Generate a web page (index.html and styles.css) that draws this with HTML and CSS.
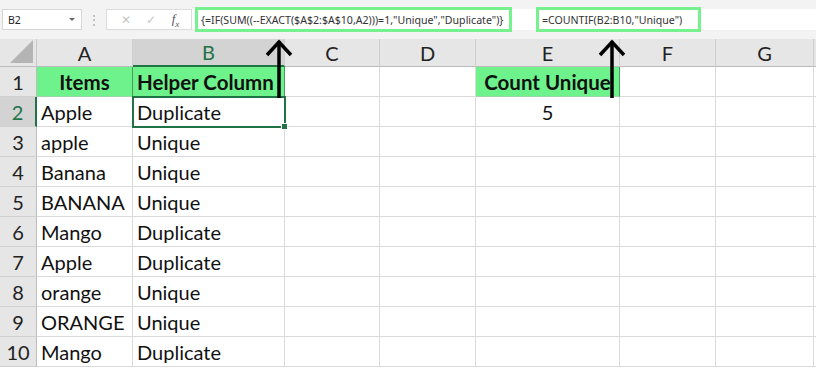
FILE: index.html
```html
<!DOCTYPE html>
<html lang="en">
<head>
    <meta charset="UTF-8">
    <title>Count Unique - Excel</title>
    <link rel="stylesheet" href="styles.css">
</head>
<body>
    <!-- Formula bar -->
    <div class="formula-row">
        <div class="name-box">
            <span>B2</span>
            <span class="caret"></span>
        </div>
        <div class="dots">&#8942;</div>
        <div class="fx-buttons">
            <span class="fx-btn">&#10005;</span>
            <span class="fx-btn">&#10003;</span>
            <span class="fx-btn fx">f<sub>x</sub></span>
        </div>
        <div class="formula-input">
            <div class="formula-box box-one">{=IF(SUM((--EXACT($A$2:$A$10,A2)))=1,"Unique","Duplicate")}</div>
            <div class="formula-box box-two">=COUNTIF(B2:B10,"Unique")</div>
        </div>
    </div>

    <!-- Sheet -->
    <div class="sheet-wrap">
        <div class="sheet" id="sheet"></div>

        <!-- Arrows pointing to formulas -->
        <svg class="arrows" width="816" height="110" viewBox="0 0 816 110">
            <g stroke="#000" stroke-width="3.5" fill="none" stroke-linecap="butt" stroke-linejoin="miter">
                <path d="M279 6 V63"/>
                <path d="M267 20 L279 7 L291 20"/>
                <path d="M612 6 V63"/>
                <path d="M600 20 L612 7 L624 20"/>
            </g>
        </svg>
    </div>

    <script>
        const cols = ['A', 'B', 'C', 'D', 'E', 'F', 'G'];
        const rows = [
            ['Items', 'Helper Column', '', '', 'Count Unique', '', ''],
            ['Apple', 'Duplicate', '', '', '5', '', ''],
            ['apple', 'Unique', '', '', '', '', ''],
            ['Banana', 'Unique', '', '', '', '', ''],
            ['BANANA', 'Unique', '', '', '', '', ''],
            ['Mango', 'Duplicate', '', '', '', '', ''],
            ['Apple', 'Duplicate', '', '', '', '', ''],
            ['orange', 'Unique', '', '', '', '', ''],
            ['ORANGE', 'Unique', '', '', '', '', ''],
            ['Mango', 'Duplicate', '', '', '', '', '']
        ];

        const sheet = document.getElementById('sheet');

        function addCell(text, className) {
            const cell = document.createElement('div');
            cell.className = className;
            cell.textContent = text;
            sheet.appendChild(cell);
            return cell;
        }

        // Header row
        const corner = addCell('', 'corner');
        corner.innerHTML = '<span class="corner-tri"></span>';
        cols.forEach(c => {
            addCell(c, c === 'B' ? 'col-head active' : 'col-head');
        });
        addCell('', 'col-head tail');

        // Data rows
        rows.forEach((row, r) => {
            addCell(r + 1, r === 1 ? 'row-head active' : 'row-head');
            row.forEach((val, c) => {
                let cls = 'cell';
                if (r === 0 && (c === 0 || c === 1 || c === 4)) cls += ' head-fill';
                if (r === 0 && c === 0) cls += ' center';
                if (c === 4) cls += ' center';
                if (r === 1 && c === 1) cls += ' selected';
                addCell(val, cls);
            });
            addCell('', 'cell tail');
        });
    </script>
</body>
</html>
```

FILE: styles.css
```css
* {
    margin: 0;
    padding: 0;
    box-sizing: border-box;
}

body {
    width: 816px;
    height: 371px;
    background: #fff;
    overflow: hidden;
    font-family: Lato, "Open Sans", sans-serif;
}

/* Formula bar */
.formula-row {
    height: 39px;
    background: #f3f3f3;
    display: flex;
    align-items: center;
    padding-left: 2px;
    font-family: "Noto Sans", "Open Sans", sans-serif;
}

.name-box {
    width: 80px;
    height: 21px;
    background: #fff;
    border: 1px solid #d6d6d6;
    display: flex;
    align-items: center;
    justify-content: space-between;
    padding: 0 6px 0 5px;
    font-size: 10.5px;
    color: #222;
}

.caret {
    width: 0;
    height: 0;
    border-left: 3px solid transparent;
    border-right: 3px solid transparent;
    border-top: 3px solid #666;
}

.dots {
    width: 24px;
    text-align: center;
    color: #aaa;
    font-size: 12px;
}

.fx-buttons {
    width: 85px;
    height: 21px;
    background: #fff;
    border: 1px solid #dcdcdc;
    border-right: none;
    display: flex;
    align-items: center;
    justify-content: space-around;
    padding: 0 4px 0 6px;
}

.fx-btn {
    color: #c6c6c6;
    font-size: 12px;
}

.fx-btn.fx {
    color: #555;
    font-family: "Liberation Serif", serif;
    font-style: italic;
    font-size: 13px;
}

.fx-btn.fx sub {
    font-size: 9px;
}

.formula-input {
    flex: 1;
    height: 21px;
    background: #fff;
    border-left: 1px solid #dcdcdc;
    display: flex;
    align-items: center;
    padding-left: 3px;
}

.formula-box {
    height: 25px;
    border: 3px solid #77f08e;
    background: #fff;
    display: flex;
    align-items: center;
    padding: 1px 0 0 3px;
    font-size: 10.6px;
    color: #333;
    white-space: nowrap;
}

.box-one {
    width: 317px;
}

.box-two {
    width: 165px;
    margin-left: 24px;
}

/* Sheet grid */
.sheet-wrap {
    position: relative;
}

.sheet {
    display: grid;
    grid-template-columns: 37px 96px 152px 95px 96px 144px 96px 98px 2px;
    grid-template-rows: 28px repeat(10, 30px);
}

.corner {
    background: #e6e6e6;
    border-right: 1px solid #c9c9c9;
    border-bottom: 1px solid #bcbcbc;
    position: relative;
}

.corner-tri {
    position: absolute;
    right: 3px;
    bottom: 3px;
    width: 0;
    height: 0;
    border-left: 23px solid transparent;
    border-bottom: 23px solid #b4b4b4;
}

.col-head {
    background: #e6e6e6;
    border-right: 1px solid #cfcfcf;
    border-bottom: 1px solid #bcbcbc;
    display: flex;
    align-items: center;
    justify-content: center;
    font-size: 20px;
    color: #222;
}

.col-head.active {
    background: #d3d3d3;
    color: #217346;
    border-bottom: 2px solid #217346;
}

.col-head.tail {
    border-right: none;
}

.row-head {
    background: #e6e6e6;
    border-right: 1px solid #bcbcbc;
    border-bottom: 1px solid #d0d0d0;
    display: flex;
    align-items: center;
    justify-content: center;
    font-size: 20px;
    color: #222;
}

.row-head.active {
    background: #d3d3d3;
    color: #217346;
    border-right: 2px solid #217346;
}

.cell {
    border-right: 1px solid #dadada;
    border-bottom: 1px solid #dadada;
    display: flex;
    align-items: center;
    padding-left: 4px;
    font-size: 20px;
    color: #111;
    white-space: nowrap;
    overflow: hidden;
}

.cell.center {
    justify-content: center;
    padding-left: 0;
}

.cell.head-fill {
    background: #6ef38c;
    font-weight: bold;
    font-size: 20.5px;
    border-right: 1px solid #4a9c5c;
    border-bottom: 1px solid #9fd6a8;
}

.cell.tail {
    border-right: none;
}

.cell.selected {
    position: relative;
    overflow: visible;
    outline: 2px solid #217346;
    outline-offset: -1px;
}

.cell.selected::after {
    content: "";
    position: absolute;
    right: -4px;
    bottom: -4px;
    width: 5px;
    height: 5px;
    background: #217346;
    border: 1px solid #fff;
}

/* Arrows over the sheet */
.arrows {
    position: absolute;
    top: -4px;
    left: 0;
    pointer-events: none;
}
```
